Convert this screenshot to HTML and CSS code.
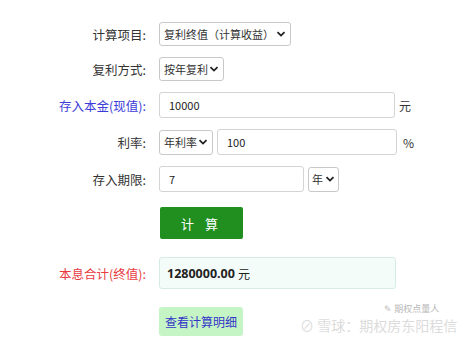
FILE: index.html
```html
<!DOCTYPE html>
<html lang="zh-CN">
  <head>
    <meta charset="UTF-8" />
    <title>复利计算器</title>
    <link rel="stylesheet" href="styles.css">
  </head>
  <body>
    <form class="calc">
      <div class="row row-select">
        <label class="lbl" for="mode">计算项目:</label>
        <select id="mode" class="sel">
          <option>复利终值（计算收益）</option>
        </select>
      </div>
      <div class="row row-select">
        <label class="lbl" for="freq">复利方式:</label>
        <select id="freq" class="sel">
          <option>按年复利</option>
        </select>
      </div>
      <div class="row">
        <label class="lbl lbl-blue" for="pv">存入本金(现值):</label>
        <input id="pv" class="inp inp-wide" type="text" value="10000" />
        <span class="unit">元</span>
      </div>
      <div class="row">
        <label class="lbl" for="rate">利率:</label>
        <select class="sel sel-rate">
          <option>年利率</option>
        </select>
        <input id="rate" class="inp inp-rate" type="text" value="100" />
        <span class="unit unit-pct">%</span>
      </div>
      <div class="row">
        <label class="lbl" for="term">存入期限:</label>
        <input id="term" class="inp inp-term" type="text" value="7" />
        <select class="sel sel-year">
          <option>年</option>
        </select>
      </div>
      <div class="row row-btn">
        <span class="lbl"></span>
        <button type="button" class="btn-calc">计 算</button>
      </div>
      <div class="row row-result">
        <label class="lbl lbl-red">本息合计(终值):</label>
        <div class="result"><b>1280000.00</b> 元</div>
      </div>
      <div class="row row-detail">
        <span class="lbl"></span>
        <button type="button" class="btn-detail">查看计算明细</button>
        <span class="mark">
          <span class="mark-top">✎ 期权点量人</span>
          <span class="mark-main">⊘ 雪球：期权房东阳程信</span>
        </span>
      </div>
    </form>
  </body>
</html>
```

FILE: styles.css
```css
body {
  margin: 0;
  background: #ffffff;
  font-family: "Noto Sans CJK SC", "Noto Sans", sans-serif;
  font-size: 11px;
  color: #333;
}
.calc {
  padding-top: 22px;
}
.row {
  display: flex;
  align-items: center;
  margin-bottom: 11px;
}
.lbl {
  width: 146px;
  flex: none;
  text-align: right;
  margin-right: 13px;
  font-size: 12.5px;
  color: #333;
}
.lbl-blue {
  color: #3b3bd8;
}
.lbl-red {
  color: #e83a40;
}
.sel {
  appearance: none;
  -webkit-appearance: none;
  height: 24px;
  border: 1px solid #c8c8c8;
  border-radius: 3px;
  background: #fff url("data:image/svg+xml,%3Csvg xmlns='http://www.w3.org/2000/svg' width='10' height='6' viewBox='0 0 10 6'%3E%3Cpath d='M1.5 1.2 5 4.6 8.5 1.2' fill='none' stroke='%23222' stroke-width='1.8'/%3E%3C/svg%3E") no-repeat right 4px center;
  padding: 0 15px 0 4px;
  font-family: inherit;
  font-size: 11px;
  color: #333;
}
#mode {
  width: 132px;
}
#freq {
  width: 65px;
}
.sel-rate {
  width: 54px;
  height: 25px;
  margin-right: 4px;
}
.sel-year {
  width: 31px;
  height: 25px;
  margin-left: 4px;
  padding-left: 3px;
  padding-right: 12px;
  background-position: right 3px center;
}
.inp {
  height: 26px;
  box-sizing: border-box;
  border: 1px solid #d4d4d4;
  border-radius: 3px;
  padding: 0 9px;
  font-family: inherit;
  font-size: 11px;
  color: #222;
}
.inp-wide {
  width: 236px;
}
.inp-rate {
  width: 180px;
}
.inp-term {
  width: 145px;
}
.unit {
  margin-left: 4px;
  font-size: 12px;
  color: #333;
}
.unit-pct {
  margin-left: 6px;
}
.row-btn {
  margin-top: 15px;
  margin-bottom: 18px;
}
.btn-calc {
  width: 83px;
  height: 32px;
  margin-left: 1px;
  border: none;
  border-radius: 2px;
  background: #218f1f;
  color: #fff;
  font-family: inherit;
  font-size: 13px;
  letter-spacing: 4px;
}
.row-result {
  margin-bottom: 18px;
}
.result {
  width: 237px;
  height: 32px;
  box-sizing: border-box;
  padding-left: 7px;
  display: flex;
  align-items: center;
  gap: 3px;
  border: 1px solid #d7ebe5;
  border-radius: 3px;
  background: #f4fcfa;
  font-size: 12px;
  color: #222;
}
.result b {
  font-size: 12.5px;
  font-family: "Noto Sans", sans-serif;
}
.row-detail {
  position: relative;
}
.btn-detail {
  width: 84px;
  height: 29px;
  border: none;
  border-radius: 3px;
  background: #c5f5c5;
  color: #3434c8;
  font-family: inherit;
  font-size: 12px;
  padding: 0;
}
.mark {
  position: absolute;
  left: 300px;
  top: -4px;
  display: flex;
  flex-direction: column;
  align-items: flex-end;
  gap: 2px;
  white-space: nowrap;
}
.mark-top {
  font-size: 9px;
  line-height: 11px;
  color: #b8b8b8;
  margin-right: 18px;
}
.mark-main {
  font-size: 14px;
  line-height: 18px;
  color: #dcdcdc;
}
```
